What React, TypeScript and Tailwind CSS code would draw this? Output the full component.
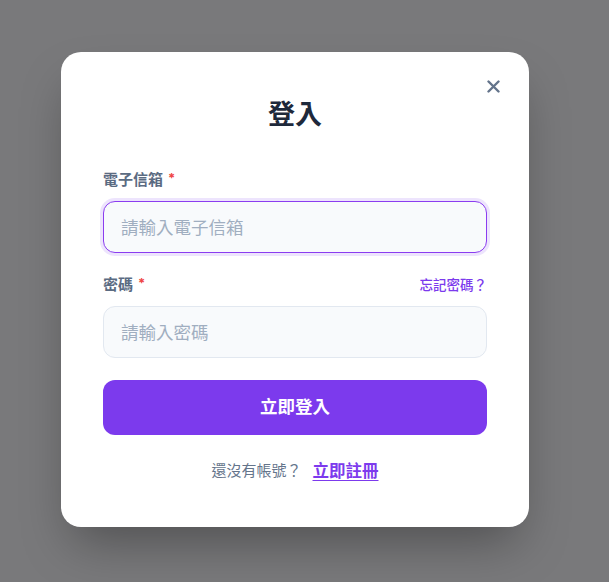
import React from "react";

export default function App() {
  return (
    <div
      className="min-h-screen w-full bg-[#79797b] flex items-center justify-center pr-[19px] pb-[4px]"
      style={{ fontFamily: '"Inter", "Noto Sans CJK TC", sans-serif' }}
    >
      <div className="relative w-[468px] bg-white rounded-[20px] shadow-[0_25px_50px_-12px_rgba(0,0,0,0.35)] px-[42px] pt-[45px] pb-[44px]">
        <button className="absolute right-[28px] top-[27px] w-[16px] h-[16px] flex items-center justify-center text-[#64748b]">
          <svg width="13" height="13" viewBox="0 0 13 13" fill="none" stroke="currentColor" strokeWidth="2.4" strokeLinecap="round">
            <path d="M1.5 1.5 L11.5 11.5 M11.5 1.5 L1.5 11.5" />
          </svg>
        </button>
        <h1 className="text-center text-[27px] leading-[36px] font-bold text-[#1e293b]">登入</h1>

        <div className="mt-[37px]">
          <label className="flex items-start gap-[5px] text-[15px] leading-[20px] font-bold text-[#5b6b82]">
            電子信箱 <span className="text-[13px] leading-[16px] text-[#ef4444]">*</span>
          </label>
          <div className="mt-[11px] h-[52px] rounded-[12px] border border-[#8b3cf0] bg-[#f8fafc] ring-[3px] ring-[#ede4fd] flex items-center px-[17px] pt-[3px]">
            <span className="text-[17.5px] text-[#a0aec0]">請輸入電子信箱</span>
          </div>
        </div>

        <div className="mt-[22px]">
          <div className="flex items-center justify-between">
            <label className="flex items-start gap-[5px] text-[15px] leading-[20px] font-bold text-[#5b6b82]">
              密碼 <span className="text-[13px] leading-[16px] text-[#ef4444]">*</span>
            </label>
            <span className="text-[13.5px] leading-[20px] font-medium text-[#7c3aed]">忘記密碼？</span>
          </div>
          <div className="mt-[11px] h-[52px] rounded-[12px] border border-[#e2e8f0] bg-[#f8fafc] flex items-center px-[17px] pt-[3px]">
            <span className="text-[17.5px] text-[#a0aec0]">請輸入密碼</span>
          </div>
        </div>

        <button className="mt-[22px] w-full h-[55px] rounded-[12px] bg-[#7c3aed] text-white text-[17.5px] font-bold flex items-center justify-center">
          立即登入
        </button>

        <div className="mt-[26px] flex items-center justify-center h-[22px] text-[#64748b]">
          <span className="text-[15px]">還沒有帳號？</span>
          <span className="ml-[11px] text-[16.5px] font-bold text-[#7c3aed] underline underline-offset-[3px]">立即註冊</span>
        </div>
      </div>
    </div>
  );
}
